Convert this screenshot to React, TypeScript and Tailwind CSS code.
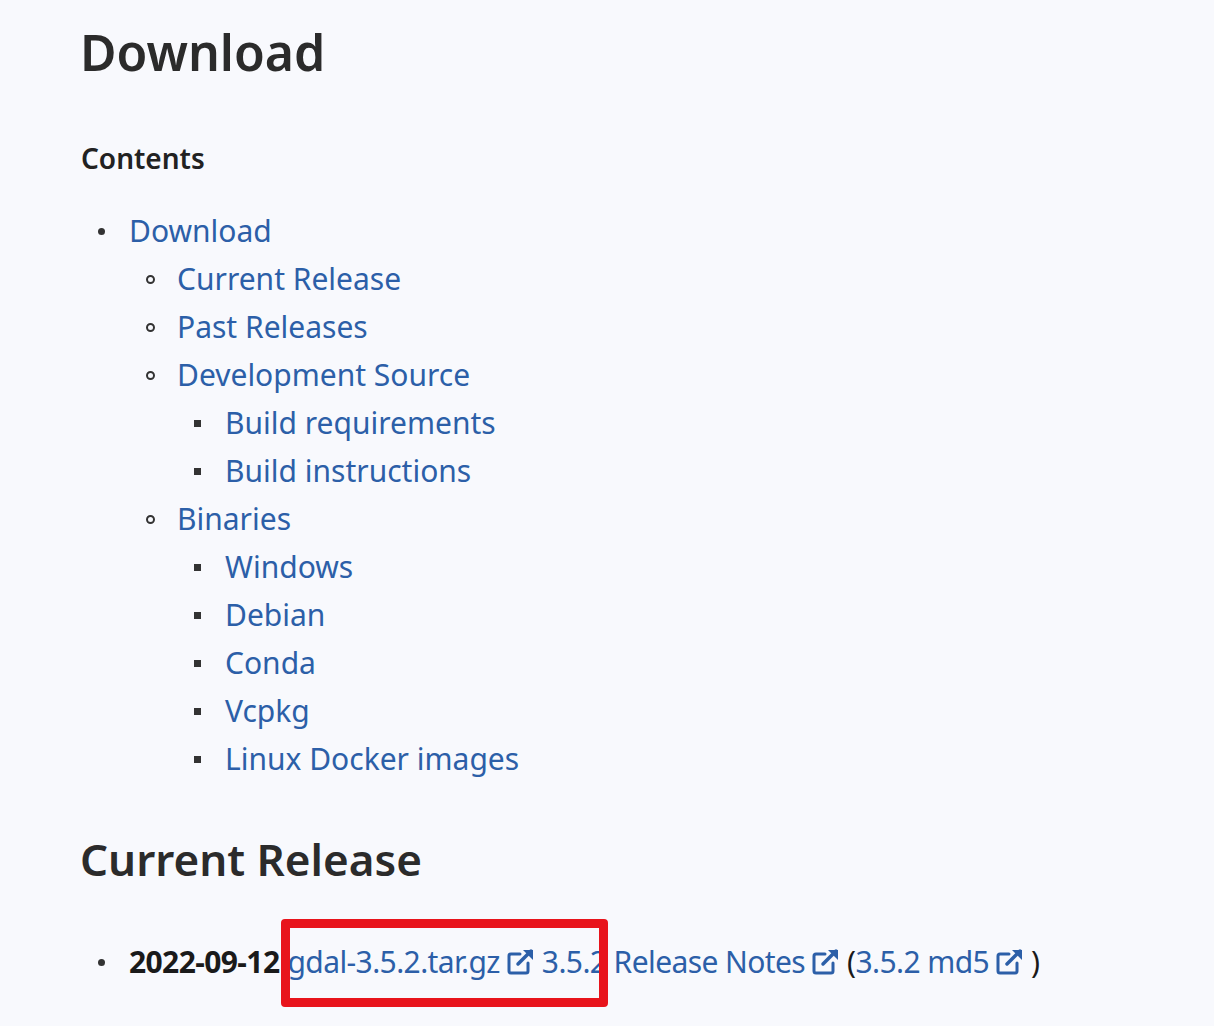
import React from 'react';

const ExtIcon = () => (
  <svg width="30" height="28" viewBox="0 0 30 28" className="inline-block mx-[6px]" fill="none">
    <path d="M14 6H5a2 2 0 0 0-2 2v15a2 2 0 0 0 2 2h15a2 2 0 0 0 2-2v-8" stroke="#2c5fa8" strokeWidth="3" strokeLinecap="round" />
    <path d="M12 16L25 3" stroke="#2c5fa8" strokeWidth="3.5" strokeLinecap="round" />
    <path d="M17 2h10v10z" fill="#2c5fa8" />
  </svg>
);

type Item = { text: string; level: number };

const items: Item[] = [
  { text: 'Download', level: 0 },
  { text: 'Current Release', level: 1 },
  { text: 'Past Releases', level: 1 },
  { text: 'Development Source', level: 1 },
  { text: 'Build requirements', level: 2 },
  { text: 'Build instructions', level: 2 },
  { text: 'Binaries', level: 1 },
  { text: 'Windows', level: 2 },
  { text: 'Debian', level: 2 },
  { text: 'Conda', level: 2 },
  { text: 'Vcpkg', level: 2 },
  { text: 'Linux Docker images', level: 2 },
];

function Bullet({ level }: { level: number }) {
  if (level === 0) return <span className="w-[7px] h-[7px] rounded-full bg-[#333]" />;
  if (level === 1) return <span className="w-[9px] h-[9px] rounded-full border-2 border-[#333]" />;
  return <span className="w-[7px] h-[7px] bg-[#333]" />;
}

const indent = ['pl-[98px]', 'pl-[146px]', 'pl-[194px]'];

export default function App() {
  return (
    <div className="min-h-[1026px] bg-[#f8f9fd] text-[#222] font-[family-name:Lato,'Liberation_Sans',sans-serif] overflow-hidden">
      <h1 className="pl-[80px] pt-[22px] text-[50px] leading-[60px] font-semibold text-[#2b2b2b]">Download</h1>
      <h3 className="pl-[81px] mt-[59px] text-[28px] leading-[34px] font-semibold text-[#222]">Contents</h3>
      <ul className="mt-[32px] text-[30px] leading-[48px] text-[#2c5fa8]">
        {items.map((it) => (
          <li key={it.text} className={`flex items-center ${indent[it.level]}`}>
            <span className="w-[31px] flex items-center">
              <Bullet level={it.level} />
            </span>
            <span>{it.text}</span>
          </li>
        ))}
      </ul>
      <h2 className="pl-[80px] mt-[48px] text-[44px] leading-[56px] font-semibold text-[#2b2b2b]">Current Release</h2>
      <div className="relative mt-[51px] pl-[98px] flex items-center text-[30px] leading-[48px] tracking-[-0.6px]">
        <span className="w-[31px] flex items-center">
          <span className="w-[7px] h-[7px] rounded-full bg-[#333]" />
        </span>
        <span className="font-bold text-[#1a1a1a]">2022-09-12</span>
        <span className="ml-[8px] text-[#2c5fa8]">gdal-3.5.2.tar.gz</span>
        <ExtIcon />
        <span className="text-[#2c5fa8]">3.5.2 Release Notes</span>
        <ExtIcon />
        <span className="text-[#1a1a1a]">(</span>
        <span className="text-[#2c5fa8]">3.5.2 md5</span>
        <ExtIcon />
        <span className="text-[#1a1a1a]">)</span>
        <div className="absolute left-[281px] top-[-19px] w-[327px] h-[88px] border-[9px] border-[#e8141c] rounded-[4px]" />
      </div>
    </div>
  );
}
